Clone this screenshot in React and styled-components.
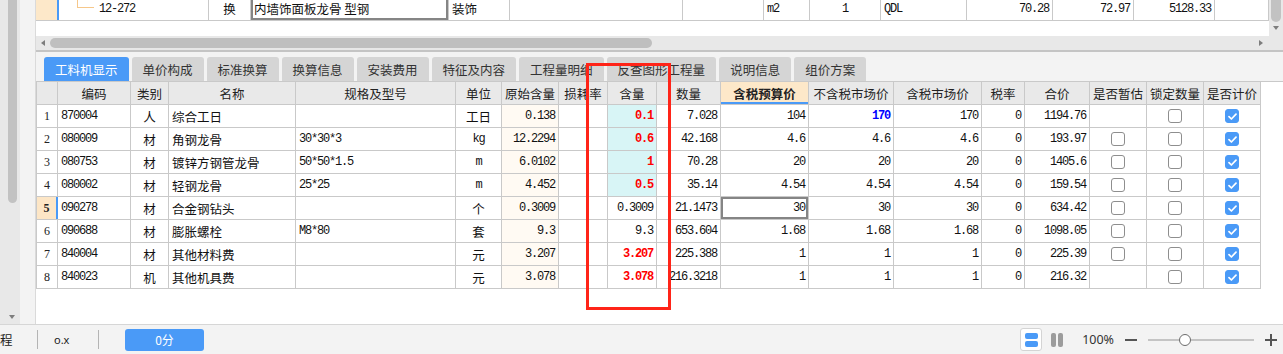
import React from 'react'
import styled, { createGlobalStyle } from 'styled-components'

const CJK = `"Noto Sans CJK SC", "Noto Sans", sans-serif`
const MONO = `"Liberation Mono", "DejaVu Sans Mono", "Noto Sans CJK SC", monospace`
const LINE = '#c9c9c9'
const BLUE = '#4a9af7'

const GlobalStyle = createGlobalStyle`
    html, body { margin: 0; padding: 0; background: #fff; }
    body { font-family: ${CJK}; color: #1a1a1a; }
`

const rows = [
    { no: 1, code: '870004', type: '人', name: '综合工日', spec: '', unit: '工日', orig: '0.138', qty: '0.1', red: true, hi: true, amount: '7.028', taxBudget: '104', noTax: '170', blue: true, taxMarket: '170', total: '1194.76', est: null, lock: false, priced: true },
    { no: 2, code: '080009', type: '材', name: '角钢龙骨', spec: '30*30*3', unit: 'kg', latin: true, orig: '12.2294', qty: '0.6', red: true, hi: true, amount: '42.168', taxBudget: '4.6', noTax: '4.6', taxMarket: '4.6', total: '193.97', est: false, lock: false, priced: true },
    { no: 3, code: '080753', type: '材', name: '镀锌方钢管龙骨', spec: '50*50*1.5', unit: 'm', latin: true, orig: '6.0102', qty: '1', red: true, hi: true, amount: '70.28', taxBudget: '20', noTax: '20', taxMarket: '20', total: '1405.6', est: false, lock: false, priced: true },
    { no: 4, code: '080002', type: '材', name: '轻钢龙骨', spec: '25*25', unit: 'm', latin: true, orig: '4.452', qty: '0.5', red: true, hi: true, amount: '35.14', taxBudget: '4.54', noTax: '4.54', taxMarket: '4.54', total: '159.54', est: false, lock: false, priced: true },
    { no: 5, code: '090278', type: '材', name: '合金钢钻头', spec: '', unit: '个', orig: '0.3009', qty: '0.3009', current: true, amount: '21.1473', taxBudget: '30', noTax: '30', taxMarket: '30', total: '634.42', est: false, lock: false, priced: true },
    { no: 6, code: '090688', type: '材', name: '膨胀螺栓', spec: 'M8*80', unit: '套', orig: '9.3', qty: '9.3', amount: '653.604', taxBudget: '1.68', noTax: '1.68', taxMarket: '1.68', total: '1098.05', est: false, lock: false, priced: true },
    { no: 7, code: '840004', type: '材', name: '其他材料费', spec: '', unit: '元', orig: '3.207', qty: '3.207', red: true, amount: '225.388', taxBudget: '1', noTax: '1', taxMarket: '1', total: '225.39', est: false, lock: false, priced: true },
    { no: 8, code: '840023', type: '机', name: '其他机具费', spec: '', unit: '元', orig: '3.078', qty: '3.078', red: true, amount: '216.3218', taxBudget: '1', noTax: '1', taxMarket: '1', total: '216.32', est: null, lock: false, priced: true },
]

const headers = [
    ['', 21], ['编码', 73], ['类别', 38], ['名称', 127], ['规格及型号', 160], ['单位', 46],
    ['原始含量', 57], ['损耗率', 49], ['含量', 49], ['数量', 64], ['含税预算价', 88, true],
    ['不含税市场价', 85], ['含税市场价', 88], ['税率', 43], ['合价', 65],
    ['是否暂估', 57], ['锁定数量', 57], ['是否计价', 57],
]

const tabs = ['工料机显示', '单价构成', '标准换算', '换算信息', '安装费用', '特征及内容', '工程量明细', '反查图形工程量', '说明信息', '组价方案']

function Checkbox({ on }) {
    return (
        <Check $on={on}>
            {on && (
                <svg width="9" height="7" viewBox="0 0 9 7">
                    <path d="M1 3.6 L3.4 6 L8 1.2" stroke="#fff" strokeWidth="1.7" fill="none" strokeLinecap="round" strokeLinejoin="round" />
                </svg>
            )}
        </Check>
    )
}

function MaterialRow({ r }) {
    return (
        <Row>
            <NoCell $current={r.current}>{r.no}</NoCell>
            <Cell $w={73} $mono>{r.code}</Cell>
            <Cell $w={38} $align="center">{r.type}</Cell>
            <Cell $w={127}>{r.name}</Cell>
            <Cell $w={160} $mono>{r.spec}</Cell>
            <Cell $w={46} $align="center" $mono={r.latin}>{r.unit}</Cell>
            <Cell $w={57} $align="right" $mono $bg="#fffaf3">{r.orig}</Cell>
            <Cell $w={49} />
            <Cell $w={49} $align="right" $mono $bg={r.hi ? '#d8f5f6' : undefined} $color={r.red ? '#ff0000' : undefined} $bold={r.red}>{r.qty}</Cell>
            <Cell $w={64} $align="right" $mono>{r.amount}</Cell>
            <Cell $w={88} $align="right" $mono $selected={r.current}>{r.taxBudget}</Cell>
            <Cell $w={85} $align="right" $mono $color={r.blue ? '#0000ff' : undefined} $bold={r.blue}>{r.noTax}</Cell>
            <Cell $w={88} $align="right" $mono>{r.taxMarket}</Cell>
            <Cell $w={43} $align="right" $mono>0</Cell>
            <Cell $w={65} $align="right" $mono>{r.total}</Cell>
            <Cell $w={57} $align="center">{r.est !== null && <Checkbox on={r.est} />}</Cell>
            <Cell $w={57} $align="center"><Checkbox on={r.lock} /></Cell>
            <Cell $w={57} $align="center"><Checkbox on={r.priced} /></Cell>
        </Row>
    )
}

export default function App() {
    return (
        <Screen>
            <GlobalStyle />
            <Workspace>
                <SidePanel>
                    <SideTrack>
                        <SideThumb />
                        <ArrowDown />
                    </SideTrack>
                </SidePanel>
                <MainPane>
                    <TopGrid>
                        <TopBody>
                            <TopRows>
                                <TopRow>
                                    <TopHead />
                                    <Cell $w={152} $mono $lead>
                                        <TreeMark />
                                        12-272
                                    </Cell>
                                    <Cell $w={42} $align="center">换</Cell>
                                    <Cell $w={198} $boxed>内墙饰面板龙骨 型钢</Cell>
                                    <Cell $w={61}>装饰</Cell>
                                    <Cell $w={173} />
                                    <Cell $w={81} />
                                    <Cell $w={46} $mono>m2</Cell>
                                    <Cell $w={71} $mono $align="center">1</Cell>
                                    <Cell $w={86} $mono>QDL</Cell>
                                    <Cell $w={86} $mono $align="right">70.28</Cell>
                                    <Cell $w={81} $mono $align="right">72.97</Cell>
                                    <Cell $w={81} $mono $align="right">5128.33</Cell>
                                    <Cell $w={54} />
                                </TopRow>
                            </TopRows>
                            <VScroll>
                                <VThumb />
                                <ArrowDown $small />
                            </VScroll>
                        </TopBody>
                        <HScroll>
                            <ArrowLeft />
                            <HThumb />
                            <ArrowRight />
                        </HScroll>
                    </TopGrid>
                    <Divider />
                    <TabStrip>
                        {tabs.map((t, i) => <Tab key={t} $active={i === 0}>{t}</Tab>)}
                    </TabStrip>
                    <GridArea>
                        <Table>
                            <HeaderRow>
                                {headers.map(([t, w, hot], i) => <HeadCell key={i} $w={w} $hot={hot}>{t}</HeadCell>)}
                            </HeaderRow>
                            {rows.map(r => <MaterialRow key={r.no} r={r} />)}
                        </Table>
                    </GridArea>
                </MainPane>
            </Workspace>
            <StatusBar>
                <StatusText>程</StatusText>
                <StatusSep />
                <SmallText>o.x</SmallText>
                <StatusSep />
                <ScoreButton>0分</ScoreButton>
                <RightTools>
                    <ViewBox>
                        <StackBar />
                        <StackBar />
                    </ViewBox>
                    <ColumnsIcon>
                        <ColBar />
                        <ColBar />
                    </ColumnsIcon>
                    <Zoom>100%</Zoom>
                    <Minus />
                    <Slider><Knob /></Slider>
                    <Plus />
                </RightTools>
            </StatusBar>
            <Marker />
        </Screen>
    )
}

const Screen = styled.div`
    position: relative;
    width: 1283px;
    height: 354px;
    overflow: hidden;
    display: flex;
    flex-direction: column;
    background: #fff;
`
const Workspace = styled.div`
    display: flex;
    height: 324px;
`
const SidePanel = styled.div`
    width: 36px;
    flex: none;
    box-sizing: border-box;
    border-right: 1px solid #dadada;
    background: #f3f3f3;
`
const SideTrack = styled.div`
    width: 20px;
    height: 100%;
    background: #e8e8e8;
    display: flex;
    flex-direction: column;
    align-items: flex-start;
    padding-left: 8px;
    box-sizing: border-box;
`
const SideThumb = styled.div`
    width: 9px;
    height: 203px;
    background: #c2c2c2;
    border-radius: 0 0 5px 5px;
`
const ArrowDown = styled.div`
    margin-top: ${p => p.$small ? '4px' : 'auto'};
    margin-bottom: ${p => p.$small ? '0' : '5px'};
    margin-left: ${p => p.$small ? '0' : '1px'};
    width: 0;
    height: 0;
    border-left: 3.5px solid transparent;
    border-right: 3.5px solid transparent;
    border-top: 4px solid #7d7d7d;
`
const MainPane = styled.div`
    flex: 1;
    min-width: 0;
    display: flex;
    flex-direction: column;
`
const TopGrid = styled.div`
    height: 50px;
    display: flex;
    flex-direction: column;
`
const TopBody = styled.div`
    height: 36px;
    display: flex;
`
const TopRows = styled.div`
    flex: 1;
`
const Row = styled.div`
    display: flex;
    height: 23px;
    box-sizing: border-box;
    border-bottom: 1px solid ${LINE};
`
const TopRow = styled(Row)`
    height: 21px;
    width: 1233px;
    & > div {
        padding-bottom: 3px;
    }
`
const TopHead = styled.div`
    width: 21px;
    flex: none;
    background: #fde8c9;
`
const TreeMark = styled.span`
    align-self: flex-start;
    width: 16px;
    height: 7px;
    margin: 0 5px 0 15px;
    border-left: 1px solid #f6c78a;
    border-bottom: 1px solid #f6c78a;
    flex: none;
`
const VScroll = styled.div`
    width: 14px;
    background: #e8e8e8;
    display: flex;
    flex-direction: column;
    align-items: center;
`
const VThumb = styled.div`
    width: 10px;
    height: 22px;
    background: #c2c2c2;
    border-radius: 0 0 5px 5px;
`
const HScroll = styled.div`
    height: 14px;
    background: #e8e8e8;
    display: flex;
    align-items: center;
    padding-left: 5px;
`
const ArrowLeft = styled.div`
    width: 0;
    height: 0;
    border-top: 3.5px solid transparent;
    border-bottom: 3.5px solid transparent;
    border-right: 4px solid #7d7d7d;
`
const ArrowRight = styled.div`
    margin-left: auto;
    margin-right: 20px;
    width: 0;
    height: 0;
    border-top: 3.5px solid transparent;
    border-bottom: 3.5px solid transparent;
    border-left: 4px solid #7d7d7d;
`
const HThumb = styled.div`
    margin-left: 5px;
    width: 602px;
    height: 10px;
    background: #bfbfbf;
    border-radius: 5px;
`
const Divider = styled.div`
    height: 2px;
    background: #c4c4c4;
`
const TabStrip = styled.div`
    height: 30px;
    box-sizing: border-box;
    border-bottom: 1px solid ${LINE};
    background: #f3f3f3;
    display: flex;
    align-items: flex-end;
    gap: 3px;
    padding-left: 8px;
`
const Tab = styled.div`
    height: 24px;
    padding: 0 11px;
    display: flex;
    align-items: center;
    border-radius: 3px 3px 0 0;
    background: ${p => p.$active ? BLUE : '#d5d5d5'};
    color: ${p => p.$active ? '#fff' : '#333'};
    font-size: 12.5px;
    white-space: nowrap;
`
const GridArea = styled.div`
    flex: 1;
    background: #fff;
`
const Table = styled.div`
    width: 1225px;
    box-sizing: border-box;
    border-left: 1px solid ${LINE};
`
const HeaderRow = styled(Row)`
    background: #e9e9e9;
`
const HeadCell = styled.div`
    width: ${p => p.$w}px;
    flex: none;
    box-sizing: border-box;
    border-right: 1px solid ${LINE};
    display: flex;
    align-items: center;
    justify-content: center;
    font-size: 12.5px;
    color: #222;
    white-space: nowrap;
    overflow: hidden;
    background: ${p => p.$hot ? '#fde8c9' : 'transparent'};
    font-weight: ${p => p.$hot ? 700 : 400};
    box-shadow: ${p => p.$hot ? `inset 0 -2px 0 ${BLUE}` : 'none'};
`
const Cell = styled.div`
    width: ${p => p.$w}px;
    flex: none;
    box-sizing: border-box;
    border-right: 1px solid ${LINE};
    border-left: ${p => p.$lead ? `2px solid ${BLUE}` : 'none'};
    padding: 0 3px;
    display: flex;
    align-items: center;
    justify-content: ${p => p.$align === 'right' ? 'flex-end' : p.$align === 'center' ? 'center' : 'flex-start'};
    background: ${p => p.$bg || 'transparent'};
    color: ${p => p.$color || '#111'};
    font-weight: ${p => p.$bold ? 700 : 400};
    font-family: ${p => p.$mono ? MONO : CJK};
    font-size: ${p => p.$mono ? '12px' : '12.5px'};
    letter-spacing: ${p => p.$mono ? '-1.2px' : '0'};
    white-space: nowrap;
    overflow: hidden;
    box-shadow: ${p => p.$selected ? 'inset 0 0 0 2px #858585' : p.$boxed ? 'inset 2px 0 0 #858585, inset -2px 0 0 #858585, inset 0 -2px 0 #858585' : 'none'};
`
const NoCell = styled.div`
    width: 21px;
    flex: none;
    box-sizing: border-box;
    border-right: ${p => p.$current ? `2px solid ${BLUE}` : `1px solid ${LINE}`};
    display: flex;
    align-items: center;
    justify-content: center;
    font-family: "Liberation Serif", serif;
    font-size: 12px;
    font-weight: ${p => p.$current ? 700 : 400};
    background: ${p => p.$current ? '#fde6c6' : '#fff'};
    color: #222;
`
const Check = styled.span`
    width: 14px;
    height: 14px;
    box-sizing: border-box;
    border-radius: 3px;
    border: 1px solid ${p => p.$on ? BLUE : '#8e8e8e'};
    background: ${p => p.$on ? BLUE : '#fff'};
    display: inline-flex;
    align-items: center;
    justify-content: center;
`
const StatusBar = styled.div`
    height: 30px;
    box-sizing: border-box;
    border-top: 1px solid #d6d6d6;
    background: #f3f3f3;
    display: flex;
    align-items: center;
    color: #222;
`
const StatusText = styled.span`
    font-size: 12.5px;
    width: 12px;
    margin-right: 25px;
`
const StatusSep = styled.span`
    width: 1px;
    height: 19px;
    background: #b4b4b4;
    margin-right: 16px;
`
const SmallText = styled.span`
    font-family: "Noto Sans", sans-serif;
    font-size: 11px;
    width: 17px;
    margin-right: 27px;
`
const ScoreButton = styled.div`
    margin-left: 10px;
    width: 79px;
    height: 22px;
    border-radius: 3px;
    background: ${BLUE};
    color: #fff;
    font-size: 12px;
    display: flex;
    align-items: center;
    justify-content: center;
`
const RightTools = styled.div`
    margin-left: auto;
    margin-right: 6px;
    display: flex;
    align-items: center;
`
const ViewBox = styled.div`
    width: 22px;
    height: 23px;
    box-sizing: border-box;
    border: 1px solid #d4d4d4;
    border-radius: 3px;
    background: #fff;
    display: flex;
    flex-direction: column;
    align-items: center;
    justify-content: center;
    gap: 2px;
    margin-right: 9px;
`
const StackBar = styled.span`
    width: 13px;
    height: 6px;
    border-radius: 2px;
    background: ${BLUE};
`
const ColumnsIcon = styled.div`
    display: flex;
    gap: 2px;
    margin-right: 19px;
`
const ColBar = styled.span`
    width: 5px;
    height: 14px;
    border-radius: 2px;
    background: #9c9c9c;
`
const Zoom = styled.span`
    font-family: "Noto Sans", sans-serif;
    font-size: 12.5px;
    color: #333;
    margin-right: 11px;
`
const Minus = styled.span`
    width: 12px;
    height: 2px;
    background: #555;
    margin-right: 11px;
`
const Slider = styled.div`
    width: 106px;
    height: 2px;
    background: #c4c4c4;
    display: flex;
    align-items: center;
    margin-right: 11px;
`
const Knob = styled.span`
    margin-left: 31px;
    width: 12px;
    height: 12px;
    box-sizing: border-box;
    border-radius: 50%;
    border: 1.5px solid #6c6c6c;
    background: #fff;
`
const Plus = styled.span`
    width: 12px;
    height: 12px;
    background:
        linear-gradient(#555, #555) center / 12px 2px no-repeat,
        linear-gradient(#555, #555) center / 2px 12px no-repeat;
`
const Marker = styled.div`
    position: absolute;
    left: 586px;
    top: 63px;
    width: 85px;
    height: 247px;
    box-sizing: border-box;
    border: 3px solid #ff2418;
    pointer-events: none;
`
